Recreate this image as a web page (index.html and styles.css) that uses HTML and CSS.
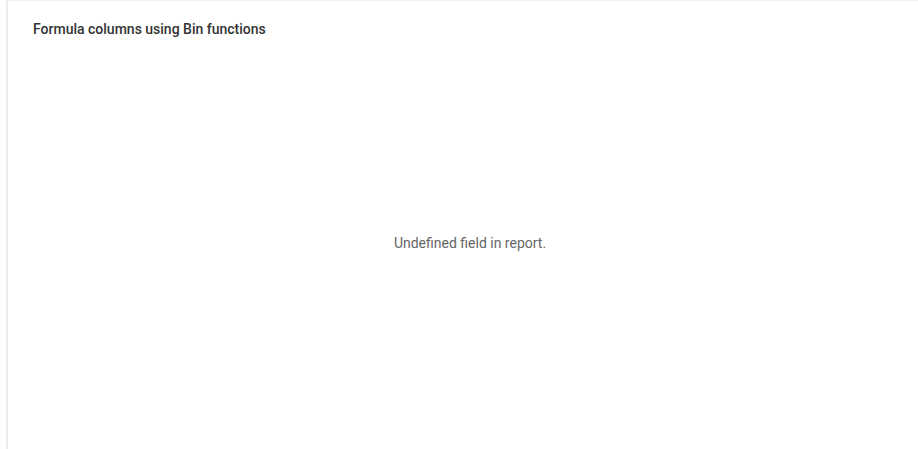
FILE: index.html
```html
<!DOCTYPE html>
<html>
<head>
<meta charset="utf-8">
<link rel="stylesheet" href="styles.css">
</head>
<body>
<div class="card">
  <div class="title">Formula columns using Bin functions</div>
  <div class="body">
    <div class="msg">Undefined field in report.</div>
  </div>
</div>
</body>
</html>
```
FILE: styles.css
```css
html, body { margin: 0; padding: 0; background: #fff; }
body { font-family: Roboto, "Noto Sans", sans-serif; height: 449px; overflow: hidden; }
.card {
  margin-left: 6px;
  height: 449px;
  border-left: 2px solid #ececf0;
  border-top: 1px solid #f0f0f0;
  box-sizing: border-box;
  display: flex;
  flex-direction: column;
}
.title {
  padding: 20px 0 0 25px;
  font-size: 14px;
  font-weight: 500;
  color: #333;
  line-height: 16px;
}
.body {
  flex: 1;
  display: flex;
  align-items: center;
  justify-content: center;
  padding-left: 14px;
}
.msg { font-size: 14px; color: #666; }
```
